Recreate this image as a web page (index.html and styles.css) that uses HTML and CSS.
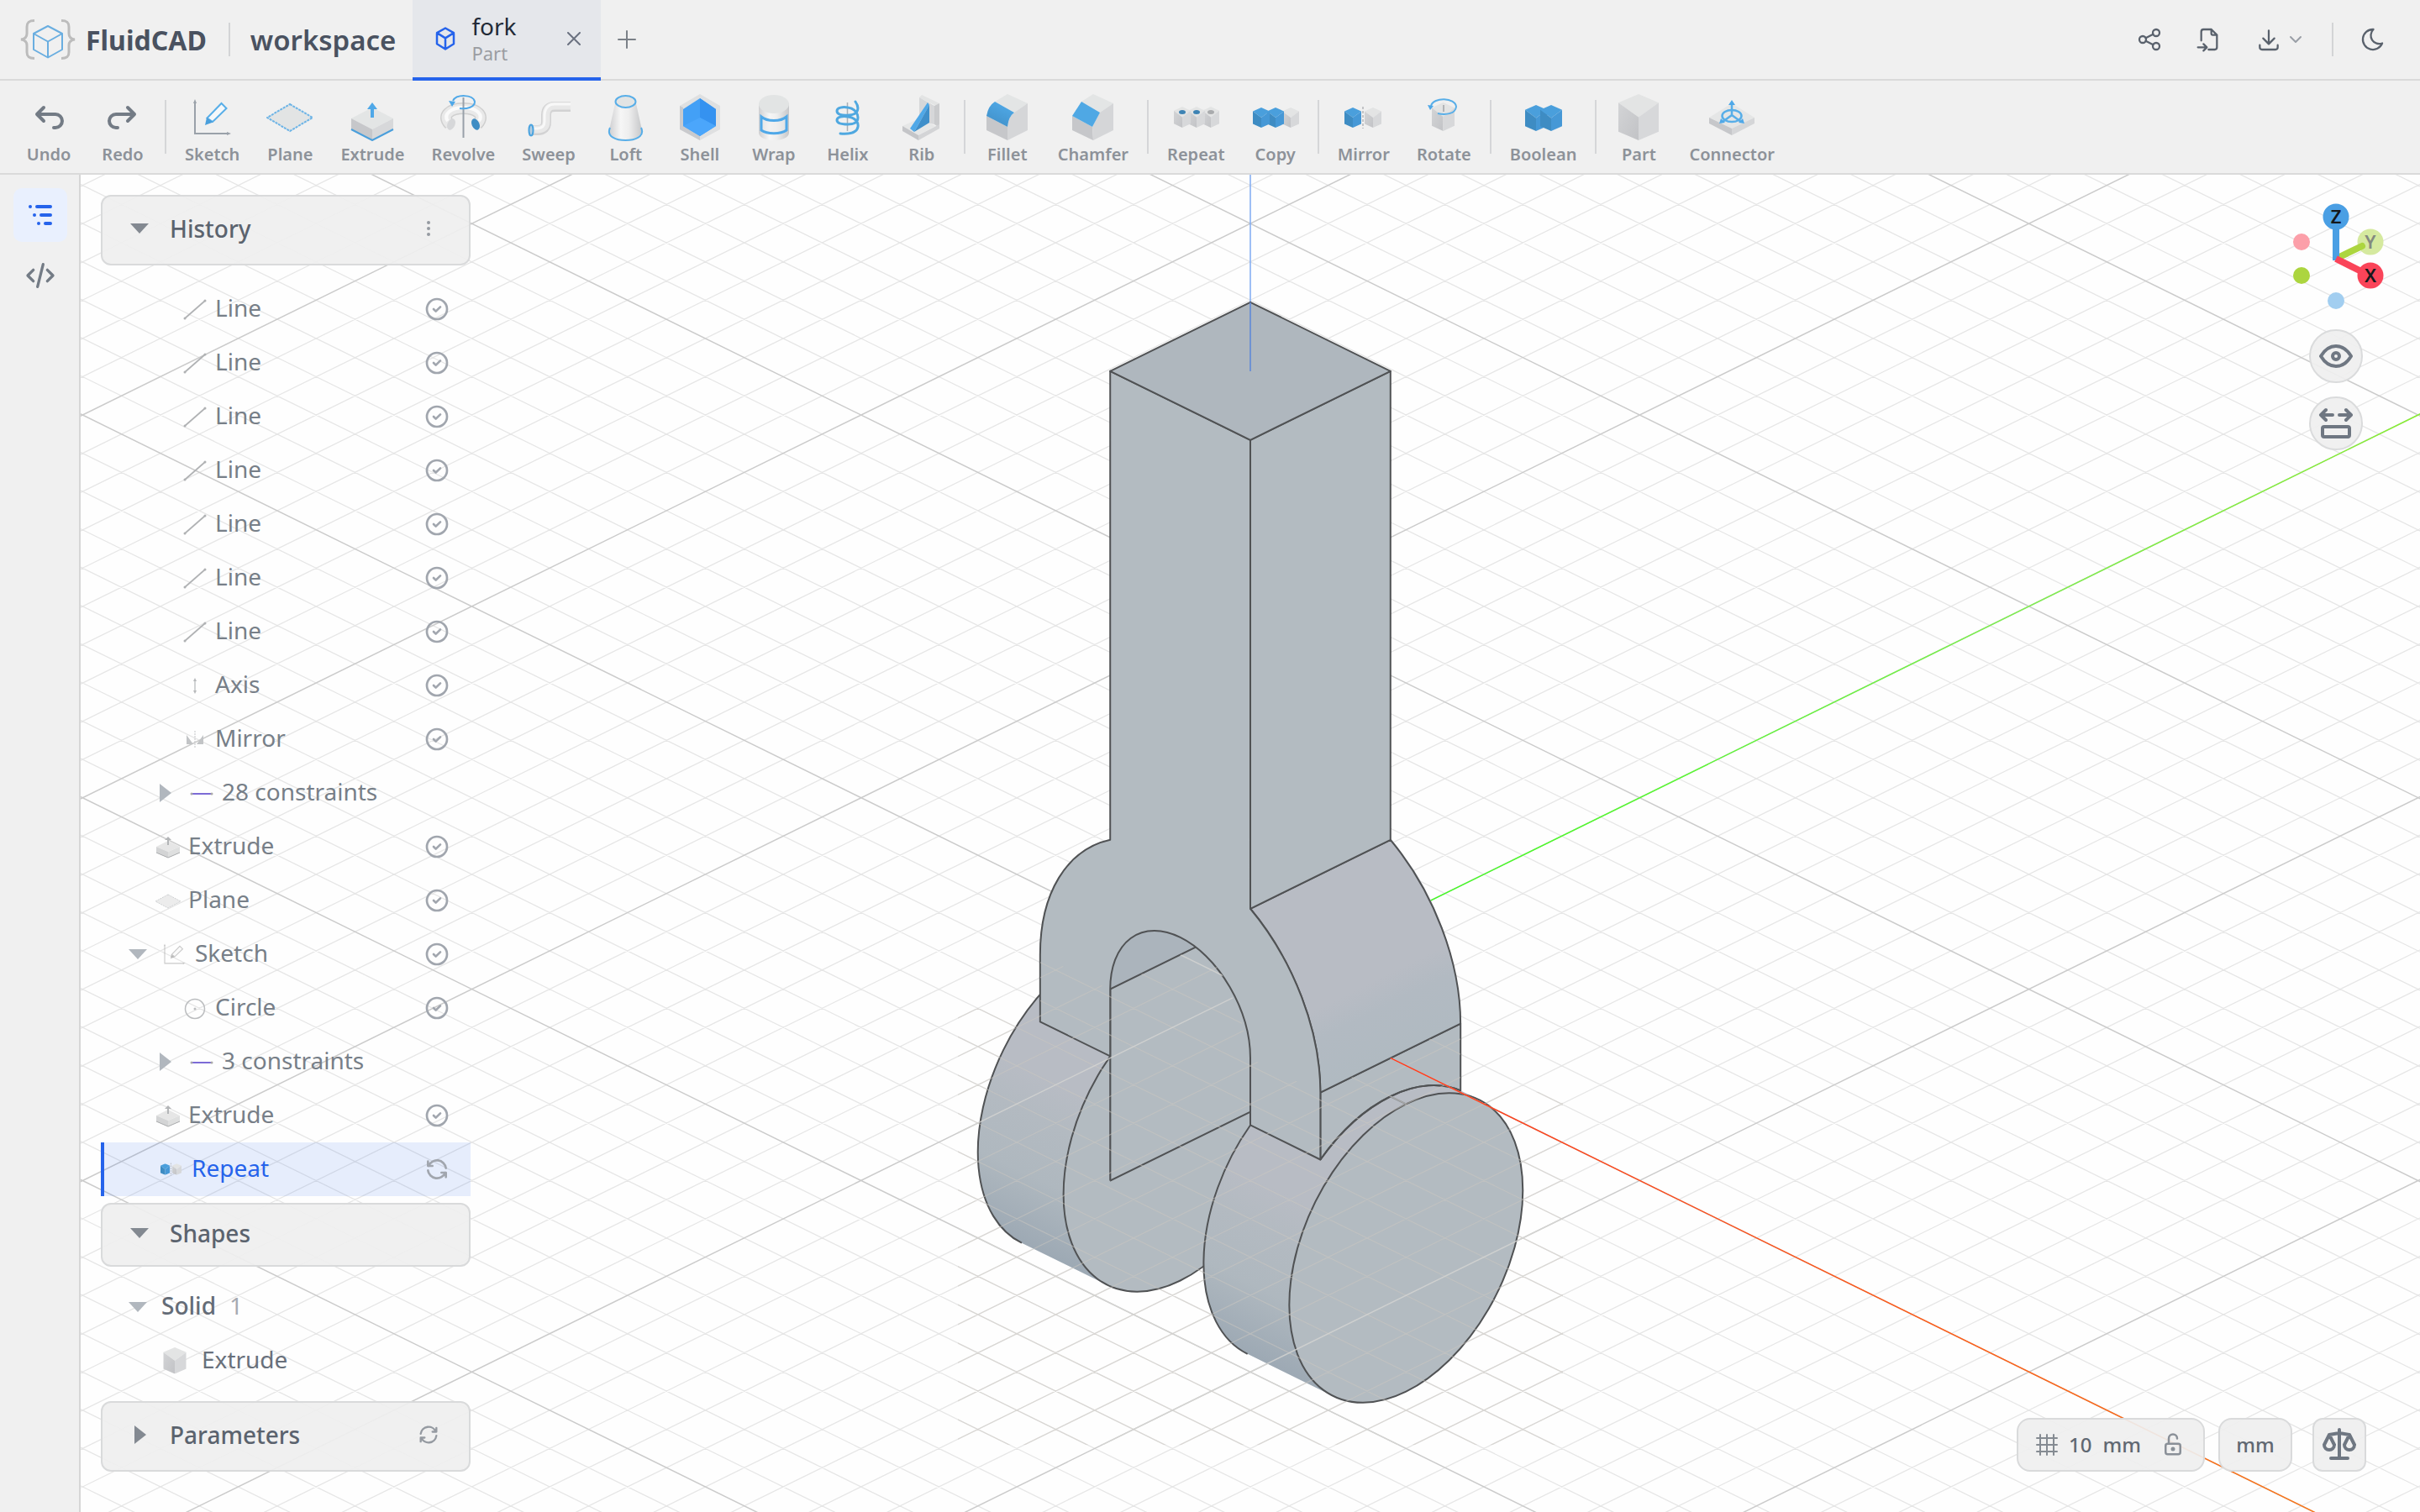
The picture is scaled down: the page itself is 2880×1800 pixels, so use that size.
FILE: index.html
```html
<!DOCTYPE html>
<html lang="en">
<head>
<meta charset="utf-8">
<title>FluidCAD - fork</title>
<link rel="stylesheet" href="styles.css">
</head>
<body>

<svg class="sprite" aria-hidden="true">
  <defs>
    <linearGradient id="pipe" x1="0" x2="1" y1="0" y2="0"><stop offset="0" stop-color="#cfcfd1"/><stop offset=".35" stop-color="#f6f6f6"/><stop offset=".6" stop-color="#eeeeee"/><stop offset="1" stop-color="#c6c7c9"/></linearGradient>
    <linearGradient id="leftside" x1="0" y1="0" x2="1" y2="1"><stop offset="0" stop-color="#d3d4d6"/><stop offset="1" stop-color="#c2c3c6"/></linearGradient>
    <linearGradient id="fillet-blue" x1="0" y1="1" x2=".5" y2="0"><stop offset="0" stop-color="#3f8dc4"/><stop offset="1" stop-color="#4fa8e6"/></linearGradient>

    <symbol id="box-grey" viewBox="0 0 48 54" preserveAspectRatio="none">
      <path fill="#e3e4e4" d="M24 0 48 10 24 27 0 10z"/><path fill="url(#leftside)" d="M0 10 24 27V54L0 44z"/><path fill="#d7d8da" d="M48 10 24 27V54L48 44z"/>
    </symbol>
    <symbol id="box-blue" viewBox="0 0 48 54" preserveAspectRatio="none">
      <path fill="#4a9fdc" d="M24 0 48 10 24 27 0 10z"/><path fill="#3e8cc3" d="M0 10 24 27V54L0 44z"/><path fill="#4698d6" d="M48 10 24 27V54L48 44z"/>
    </symbol>

    <symbol id="i-cube" viewBox="0 0 24 24"><path d="M12 2 20 6.500V17L12 22 4 17V6.500zM4 6.500 12 11.500 20 6.500M12 11.500V22"/></symbol>
    <symbol id="i-undo" viewBox="0 0 24 24"><path d="M9 14l-4-4 4-4M5 10h11a4 4 0 1 1 0 8h-1"/></symbol>
    <symbol id="i-redo" viewBox="0 0 24 24"><path d="M15 14l4-4-4-4M19 10H8a4 4 0 1 0 0 8h1"/></symbol>
    <symbol id="i-check" viewBox="0 0 24 24"><circle cx="12" cy="12" r="9"/><path d="M9 12l2 2 4-4"/></symbol>
    <symbol id="i-refresh" viewBox="0 0 24 24"><path d="M20 11A8.100 8.100 0 0 0 4.500 9M4 5v4h4M4 13a8.100 8.100 0 0 0 15.500 2M20 19v-4h-4"/></symbol>

    <symbol id="i-sketch" viewBox="0 0 56 56">
      <g fill="none" stroke="#9aa1a9" stroke-width="2"><path d="M7 9V47H47"/></g><path fill="#9aa1a9" d="M7 6 9 11H5zM50 47 45 45V49z"/>
      <path fill="#f5f8fa" stroke="#58aee8" stroke-width="2" d="M21.500 28.500 38.500 11 44.500 17 28 33z"/><path fill="#4a9fdc" d="M19 37 21 28 28.500 33.500z"/>
    </symbol>
    <symbol id="i-plane" viewBox="0 0 56 56"><path fill="#e2e4e4" stroke="#6db4e6" stroke-width="2" stroke-dasharray="3 1" d="M28 12 55 28 28 44 1 28z"/></symbol>
    <symbol id="i-extrude" viewBox="0 0 56 56">
      <path fill="#e3e5e5" d="M28 16 53 29 28 42 3 29z"/><path fill="#c6c7ca" d="M3 29 28 42V55L3 42z"/><path fill="#d7d8da" d="M53 29 28 42V55L53 42z"/>
      <path fill="none" stroke="#4a9fdc" stroke-width="2" d="M3 42 28 55 53 42"/><path fill="#4fa8e8" d="M28 10 34 18H30V28H26V18H22z"/>
    </symbol>
    <symbol id="i-revolve" viewBox="0 0 56 56">
      <path fill="none" stroke="#cfcfcf" stroke-width="14" d="M12 36C2 26 12 17 28.500 17S55 26 45 36"/><path fill="none" stroke="#e9e9e9" stroke-width="11" d="M12 36C2 26 12 17 28.500 17S55 26 45 36"/><path fill="none" stroke="#fafafa" stroke-width="4" d="M10 32C4 24 14 16 28.500 16S53 24 47 32"/>
      <ellipse cx="14" cy="36" rx="4.500" ry="7" transform="rotate(24 14 36)" fill="#d6d7d9"/><ellipse cx="43" cy="36" rx="4.500" ry="7" transform="rotate(-24 43 36)" fill="#3f8dc4"/>
      <path stroke="#98a0a9" stroke-width="2" d="M28.500 4V52"/><path fill="none" stroke="#4fa8e8" stroke-width="2" d="M16 8C20 0 40 0 42 9 42 16 32 18 24 17"/><path fill="#4fa8e8" d="M11 8 19 9 15 15z"/>
    </symbol>
    <symbol id="i-sweep" viewBox="0 0 56 56">
      <path fill="none" stroke="#d2d2d3" stroke-width="12" d="M7 43H15Q25 43 25 33V25Q25 15 35 15H54"/><path fill="none" stroke="#e8e8e8" stroke-width="9" d="M7 42H15Q25 42 25 33V25Q25 14 35 14H54"/><path fill="none" stroke="#f8f8f8" stroke-width="3" d="M7 41H15Q23 40 23 33V25Q24 12 35 12H54"/>
      <ellipse cx="7" cy="43" rx="2.500" ry="6.500" fill="#b5cde0" stroke="#4aa3df" stroke-width="2"/>
    </symbol>
    <symbol id="i-loft" viewBox="0 0 56 56">
      <path fill="url(#pipe)" d="M15.500 9 8 43C8 58 47 58 47 43L39.500 9z"/><ellipse cx="27.500" cy="9" rx="12" ry="7" fill="#e2e4e4" stroke="#58aee8" stroke-width="2"/><path fill="none" stroke="#58aee8" stroke-width="2" d="M9 40C4 51 17 55 27.500 55S51 51 46 40"/>
    </symbol>
    <symbol id="i-shell" viewBox="0 0 56 56">
      <path fill="#dfe0e1" d="M28 0 52 14V42L28 55 4 42V14z"/><path fill="#c9cacd" d="M4 14 8 16V38L28 50V55L4 42z"/>
      <path fill="#43a0f6" d="M28 5 47 18V38L28 50 8 38V18z"/><path fill="#3592f0" d="M28 5 47 18V38L28 28z"/><path fill="#4ba6fb" d="M28 28 47 38 28 50 8 38z"/>
    </symbol>
    <symbol id="i-wrap" viewBox="0 0 56 56">
      <path fill="url(#pipe)" d="M10 11V46C10 58 46 58 46 46V11z"/><ellipse cx="28" cy="12" rx="18" ry="11" fill="#e2e4e4"/><path fill="#efefef" fill-opacity=".6" stroke="#4fa8e8" stroke-width="3" d="M13 27C20 33 36 33 43 27V43C36 48 20 48 13 43z"/>
    </symbol>
    <symbol id="i-helix" viewBox="0 0 56 56">
      <path stroke="#aab0b6" stroke-width="1.500" d="M27.500 10V44"/><path fill="none" stroke="#4fa8e0" stroke-width="3" stroke-linecap="round" d="M37 9C42 16 41 24 30 25 20 26 15 24 15 20S22 15 28 16C37 17 40 24 40 28 40 34 35 36 28 36S15 35 15 31 22 26 28 27C37 28 41 34 40 39 39 45 32 48 19 47"/>
    </symbol>
    <symbol id="i-rib" viewBox="0 0 56 56">
      <path fill="#e3e4e4" d="M28 1 49 11 45 14 25 4z"/><path fill="#d6d7d9" d="M25 4 43 14V36L25 32z"/><path fill="#cacbcd" d="M43 14 49 11V40L43 36z"/><path fill="#e6e7e7" d="M5 38 25 29 44 38 24 49z"/><path fill="#c4c5c8" d="M5 38 24 49V55L5 44z"/><path fill="#d3d4d6" d="M24 49 49 36V41L24 55z"/>
      <path fill="#4fa8e8" d="M35 10 37 13 19 45 14 41z"/><path fill="#3f8fca" d="M37 13V34L19 45z"/>
    </symbol>
    <symbol id="i-fillet" viewBox="0 0 56 56">
      <path fill="#e3e5e5" d="M28 0 52 11 36 22 13 9z"/><path fill="#c6c7ca" d="M3 26 28 39V55L3 43z"/><path fill="#d5d6d8" d="M52 11V43L28 55V39Q29 27 36 22z"/><path fill="url(#fillet-blue)" d="M13 9 36 22Q29 27 28 39L3 26Q5 14 13 9z"/>
    </symbol>
    <symbol id="i-chamfer" viewBox="0 0 56 56">
      <path fill="#e3e5e5" d="M28 0 52 11 36 22 14 9z"/><path fill="#c6c7ca" d="M3 26 27 39 28 55 3 43z"/><path fill="#d5d6d8" d="M52 11V43L28 55 27 39 36 22z"/><path fill="#4fa8e4" d="M14 9 36 22 27 39 3 26z"/>
    </symbol>
    <symbol id="i-repeat" viewBox="0 0 56 56">
      <use href="#box-grey" x="36" y="15" width="20" height="25"/><use href="#box-grey" x="19" y="15" width="20" height="25"/><use href="#box-grey" x="2" y="15" width="20" height="25"/>
      <g fill="#3d83b4"><ellipse cx="12" cy="21.500" rx="4" ry="2.500"/><ellipse cx="29" cy="21.500" rx="4" ry="2.500"/></g><ellipse cx="46" cy="21.500" rx="4" ry="2.500" fill="#a9abad"/>
    </symbol>
    <symbol id="i-copy" viewBox="0 0 56 56">
      <use href="#box-grey" x="36" y="16" width="20" height="24"/><use href="#box-blue" x="18" y="16" width="20" height="24"/><use href="#box-blue" x="1" y="16" width="20" height="24"/>
    </symbol>
    <symbol id="i-mirror" viewBox="0 0 56 56">
      <use href="#box-blue" x="5" y="16" width="20" height="24"/><use href="#box-grey" x="29" y="16" width="20" height="24"/><path stroke="#b2b4b7" stroke-width="1.500" stroke-dasharray="3 2" d="M27 15V41"/>
    </symbol>
    <symbol id="i-rotate" viewBox="0 0 56 56">
      <use href="#box-grey" x="14" y="10" width="27" height="34"/><path stroke="#b2b4b7" stroke-width="2" d="M28 13V21"/><path fill="none" stroke="#58aee8" stroke-width="2" d="M13 14C16 3 42 4 43 15 42 24 30 25 21 23"/><path fill="#4fa8e8" d="M9 13 16 14 12 19z"/>
    </symbol>
    <symbol id="i-boolean" viewBox="0 0 56 56">
      <use href="#box-blue" x="6" y="13" width="26" height="31"/><use href="#box-blue" x="24" y="13" width="26" height="31"/>
    </symbol>
    <symbol id="i-part" viewBox="0 0 56 56"><use href="#box-grey" x="4" y="0" width="48" height="55"/></symbol>
    <symbol id="i-connector" viewBox="0 0 56 56">
      <path fill="#e5e6e6" d="M28 11 55 28 28 41 1 28z"/><path fill="#c6c7ca" d="M1 28 28 41V49L1 35z"/><path fill="#d5d6d8" d="M55 28 28 41V49L55 35z"/>
      <g fill="none" stroke="#58aee8" stroke-width="2.500"><path d="M28 12V25L17 33M28 25 39 33"/><ellipse cx="28" cy="26" rx="11.500" ry="7"/></g><path fill="#4fa8e8" d="M28 7 32 13H24zM13 35 15 29 20 34zM43 35 41 29 36 34z"/>
    </symbol>
    <symbol id="i-slab" viewBox="0 0 32 32">
      <path fill="#e6e6e6" d="M16 9 30 16 16 22 2 16z"/><path fill="#d3d4d5" d="M2 16 16 22V29L2 23z"/><path fill="#dedfdf" d="M30 16 16 22V29L30 23z"/><path fill="none" stroke="#a9abad" d="M2 23 16 29 30 23"/><path fill="#b3b5b7" d="M16 4 20 8H17V14H15V8H12z"/>
    </symbol>
    <symbol id="i-line" viewBox="0 0 32 32"><g fill="#b0b2b4"><path stroke="#b0b2b4" stroke-width="1.700" d="M4 27 28 6"/><circle cx="4" cy="27" r="1.500"/><circle cx="28" cy="6" r="1.500"/></g></symbol>
    <symbol id="i-constraint" viewBox="0 0 32 32"><path stroke="#7c6bd6" stroke-width="2" d="M4 17H28"/><g fill="#a9a9a9"><circle cx="4" cy="17" r="1.500"/><circle cx="28" cy="17" r="1.500"/></g></symbol>
  </defs>
</svg>

<div class="app">
  <header class="topbar">
    <a class="brand" href="#">
      <svg class="logo" viewBox="0 0 66 48" aria-hidden="true">
        <g fill="none" stroke="#bcbcbc" stroke-width="3"><path d="M17 1.500C10 1.500 8 4 8 9V17C8 21 5 23.500 1 24 5 24.500 8 27 8 31V39C8 44 10 46.500 17 46.500M49 1.500C56 1.500 58 4 58 9V17C58 21 61 23.500 65 24 61 24.500 58 27 58 31V39C58 44 56 46.500 49 46.500"/></g>
        <path fill="none" stroke="#6aaee0" stroke-width="2" stroke-linejoin="round" d="M33 8 50 17V36L33 45.500 16 36V17zM16 17 33 26.500 50 17M33 26.500V45.500"/>
      </svg>
      <span>FluidCAD</span>
    </a>
    <span class="vline"></span>
    <span class="workspace">workspace</span>
    <div class="tab">
      <svg class="tab-icon line-icon" aria-hidden="true"><use href="#i-cube"/></svg>
      <div class="tab-text"><span class="tab-name">fork</span><span class="tab-kind">Part</span></div>
      <button class="tab-close" aria-label="Close tab"><svg class="line-icon" viewBox="0 0 16 16"><path d="M1 1 15 15M15 1 1 15"/></svg></button>
    </div>
    <button class="tab-add" aria-label="New tab"><svg class="line-icon" viewBox="0 0 22 22"><path d="M11 1V21M1 11H21"/></svg></button>
    <div class="actions">
      <button aria-label="Share"><svg class="line-icon" viewBox="0 0 24 24"><circle cx="6" cy="12" r="3"/><circle cx="18" cy="6" r="3"/><circle cx="18" cy="18" r="3"/><path d="M8.700 10.700l6.600-3.400M8.700 13.300l6.600 3.400"/></svg></button>
      <button aria-label="Import"><svg class="line-icon" viewBox="0 0 24 24"><path d="M14 3v4a1 1 0 0 0 1 1h4M5 13V5a2 2 0 0 1 2-2h7l5 5v11a2 2 0 0 1-2 2h-5.500M2 19h8M7 16l3 3-3 3"/></svg></button>
      <button class="download" aria-label="Export"><svg class="line-icon" viewBox="0 0 24 24"><path d="M4 17v2a2 2 0 0 0 2 2h12a2 2 0 0 0 2-2v-2M7 11l5 5 5-5M12 4V16"/></svg><svg class="chev line-icon" viewBox="0 0 16 10"><path d="M2 2 8 8 14 2"/></svg></button>
      <span class="vline"></span>
      <button aria-label="Dark mode"><svg class="line-icon" viewBox="0 0 24 24"><path d="M12 3h.4A7.500 7.500 0 0 0 20.300 15.400 9 9 0 1 1 12 3z"/></svg></button>
    </div>
  </header>

  <nav class="toolbar" aria-label="Tools">
    <button class="tool"><svg class="line-icon nav-icon"><use href="#i-undo"/></svg>Undo</button>
    <button class="tool"><svg class="line-icon nav-icon"><use href="#i-redo"/></svg>Redo</button>
    <span class="sep"></span>
    <button class="tool"><svg><use href="#i-sketch"/></svg>Sketch</button>
    <button class="tool"><svg><use href="#i-plane"/></svg>Plane</button>
    <button class="tool"><svg><use href="#i-extrude"/></svg>Extrude</button>
    <button class="tool"><svg><use href="#i-revolve"/></svg>Revolve</button>
    <button class="tool"><svg><use href="#i-sweep"/></svg>Sweep</button>
    <button class="tool"><svg><use href="#i-loft"/></svg>Loft</button>
    <button class="tool"><svg><use href="#i-shell"/></svg>Shell</button>
    <button class="tool"><svg><use href="#i-wrap"/></svg>Wrap</button>
    <button class="tool"><svg><use href="#i-helix"/></svg>Helix</button>
    <button class="tool"><svg><use href="#i-rib"/></svg>Rib</button>
    <span class="sep"></span>
    <button class="tool"><svg><use href="#i-fillet"/></svg>Fillet</button>
    <button class="tool"><svg><use href="#i-chamfer"/></svg>Chamfer</button>
    <span class="sep"></span>
    <button class="tool"><svg><use href="#i-repeat"/></svg>Repeat</button>
    <button class="tool"><svg><use href="#i-copy"/></svg>Copy</button>
    <span class="sep"></span>
    <button class="tool"><svg><use href="#i-mirror"/></svg>Mirror</button>
    <button class="tool"><svg><use href="#i-rotate"/></svg>Rotate</button>
    <span class="sep"></span>
    <button class="tool"><svg><use href="#i-boolean"/></svg>Boolean</button>
    <span class="sep"></span>
    <button class="tool"><svg><use href="#i-part"/></svg>Part</button>
    <button class="tool"><svg><use href="#i-connector"/></svg>Connector</button>
  </nav>

  <div class="body">
    <aside class="rail">
      <button class="rail-btn active" aria-label="History tree"><svg viewBox="0 0 40 40"><g stroke="currentColor" stroke-width="4" stroke-linecap="round"><path d="M16 10H32M21 20H32M26 30H32"/></g><g fill="currentColor"><circle cx="8" cy="10" r="2"/><circle cx="13" cy="20" r="2"/><circle cx="18" cy="30" r="2"/></g></svg></button>
      <button class="rail-btn" aria-label="Code"><svg class="line-icon" viewBox="0 0 24 24"><path d="M7 8l-4 4 4 4M17 8l4 4-4 4M14 4l-4 16"/></svg></button>
    </aside>

    <main class="viewport">
      <svg class="scene" viewBox="96 208 2784 1592" preserveAspectRatio="xMidYMid slice" role="img" aria-label="Fork part on the ground grid">
        <defs>
          <linearGradient id="green-axis" gradientUnits="userSpaceOnUse" x1="1700" y1="1073" x2="2880" y2="493"><stop offset="0" stop-color="#3fff1e"/><stop offset=".6" stop-color="#7fee50"/><stop offset="1" stop-color="#86f02e"/></linearGradient>
          <linearGradient id="red-axis" gradientUnits="userSpaceOnUse" x1="1655" y1="1260" x2="2752" y2="1800"><stop offset="0" stop-color="#ff3a1c"/><stop offset="1" stop-color="#f9771a"/></linearGradient>
          <linearGradient id="wheel-l" gradientUnits="userSpaceOnUse" x1="1300" y1="1308" x2="1216" y2="1480"><stop offset="0" stop-color="#b8bcc4"/><stop offset=".25" stop-color="#b3bac1"/><stop offset=".6" stop-color="#afb8bf"/><stop offset="1" stop-color="#9da9b4"/></linearGradient>
          <linearGradient id="wheel-r" gradientUnits="userSpaceOnUse" x1="1569" y1="1440" x2="1485" y2="1612"><stop offset="0" stop-color="#b8bcc4"/><stop offset=".25" stop-color="#b3bac1"/><stop offset=".6" stop-color="#afb8bf"/><stop offset="1" stop-color="#9da9b4"/></linearGradient>
          <linearGradient id="shoulder" gradientUnits="userSpaceOnUse" x1="1610" y1="1180" x2="1652" y2="1265"><stop offset="0" stop-color="#b8bcc4"/><stop offset=".35" stop-color="#b2bac2"/><stop offset="1" stop-color="#b0bac1"/></linearGradient>
          <clipPath id="wheel-l-body"><circle r="30" transform="matrix(4.6325 -2.2785 0 -5.704 1302.7 1303.3)"/><path d="M1215.900 1479.700 1317.800 1529.800 1491.400 1177 1389.500 1126.900z"/></clipPath>
          <clipPath id="wheel-r-body"><circle r="30" transform="matrix(4.6325 -2.2785 0 -5.704 1571.4 1435.4)"/><path d="M1484.600 1611.800 1586.500 1661.900 1760.100 1309.100 1658.200 1259z"/></clipPath>
          <clipPath id="arch"><path transform="matrix(4.6325 2.2785 0 -5.704 1404.6 1218.6)" d="M-18 -60V0A18 18 0 0 0 18 0V-60z"/></clipPath>
          <clipPath id="below-ground"><path d="M1238 1137 1321 1178 1423 1128 1452 1155 1475 1205 1488 1260 1571 1301 1738 1219V1300H1860V1720H1140V1200H1238z"/></clipPath>
        </defs>
        <rect x="96" y="208" width="2784" height="1592" fill="#fefefe"/>
        <path class="grid-minor"/><path class="grid-major"/>
        <path stroke="url(#green-axis)" stroke-width="1.500" d="M1488 1177.600 2900 483.100"/>
        <path stroke="#7eaaf2" stroke-width="1.500" d="M1488 200V360"/>

        <rect x="1150" y="1110" width="360" height="440" fill="url(#wheel-l)" clip-path="url(#wheel-l-body)"/>
        <g class="edges" fill="#b3bbc1">
          <path fill="none" transform="matrix(4.6325 -2.2785 0 -5.704 1302.7 1303.3)" d="M-18.730 -23.440A30 30 0 0 0 18.730 23.440"/>
          <circle r="30" transform="matrix(4.6325 -2.2785 0 -5.704 1404.6 1353.4)"/>
        </g>

        <path fill="#abb4bc" d="M1321 1405V1060H1488V1324z" clip-path="url(#arch)"/>
        <g clip-path="url(#arch)"><path class="edges" fill="#b3bbc1" d="M1321.200 1177.600 1488 1095.600V1323.600L1321.200 1405.600z"/></g>
        <path class="edges" fill="none" d="M1321.200 1177.600V1405.600"/>

        <rect x="1420" y="1250" width="360" height="430" fill="url(#wheel-r)" clip-path="url(#wheel-r-body)"/>
        <path class="edges" fill="none" transform="matrix(4.6325 -2.2785 0 -5.704 1571.4 1435.4)" d="M-18.730 -23.440A30 30 0 0 0 -18 24"/>

        <g class="edges" fill="#b3bbc1">
          <path transform="matrix(4.6325 -2.2785 0 -5.704 1654.8 1259.6)" d="M-18 0H18V-14A30 30 0 0 1 -18 -14z"/>
          <path fill="url(#shoulder)" d="M1488 1081.800C1530 1128 1571.500 1215 1571.400 1300.600L1738.200 1218.600C1738 1132 1698 1046 1654.800 999.800z" stroke="none"/>
          <path fill="none" transform="matrix(4.6325 2.2785 0 -5.704 1404.6 1218.6)" d="M18 31.180A36 36 0 0 0 36 0L72 28.760A36 36 0 0 1 54 59.940z"/>
          <path transform="matrix(4.6325 2.2785 0 -5.704 1404.6 1218.6)" d="M-18 129H18V31.180A36 36 0 0 0 36 0V-14H18V0A18 18 0 0 1 -18 0V-14H-36V0A36 36 0 0 0 -18 31.180z"/>
          <path d="M1488 523.800 1654.800 441.800V999.800L1488 1081.800z"/>
          <path fill="#afb7be" d="M1488 359.800 1654.800 441.800 1488 523.800 1321.200 441.800z"/>
          <path fill="none" transform="matrix(4.6325 -2.2785 0 -5.704 1654.8 1259.6)" d="M18 -14A30 30 0 0 1 -18 -14"/>
          <circle r="30" transform="matrix(4.6325 -2.2785 0 -5.704 1673.3 1485.5)"/>
        </g>
        <path stroke="#858a8e" stroke-width="2" d="M1654.800 1305.300 1673.300 1314.400"/>
        <path stroke="#5a86d8" stroke-width="1.500" d="M1488 360V442"/>
        <g clip-path="url(#below-ground)"><path class="grid-minor over"/><path class="grid-major over"/></g>
        <path stroke="url(#red-axis)" stroke-width="1.500" d="M1655 1259.600 2760 1803"/>
      </svg>

      <section class="panels">
        <div class="panel">
          <button class="caret down" aria-label="Collapse history"></button><h2>History</h2>
          <button class="panel-action" aria-label="History menu"><svg viewBox="0 0 28 28"><g fill="currentColor"><circle cx="14" cy="7" r="2"/><circle cx="14" cy="14" r="2"/><circle cx="14" cy="21" r="2"/></g></svg></button>
        </div>
        <ul class="rows history">
          <li class="row d3"><svg class="ri"><use href="#i-line"/></svg><span>Line</span><svg class="state line-icon"><use href="#i-check"/></svg></li>
          <li class="row d3"><svg class="ri"><use href="#i-line"/></svg><span>Line</span><svg class="state line-icon"><use href="#i-check"/></svg></li>
          <li class="row d3"><svg class="ri"><use href="#i-line"/></svg><span>Line</span><svg class="state line-icon"><use href="#i-check"/></svg></li>
          <li class="row d3"><svg class="ri"><use href="#i-line"/></svg><span>Line</span><svg class="state line-icon"><use href="#i-check"/></svg></li>
          <li class="row d3"><svg class="ri"><use href="#i-line"/></svg><span>Line</span><svg class="state line-icon"><use href="#i-check"/></svg></li>
          <li class="row d3"><svg class="ri"><use href="#i-line"/></svg><span>Line</span><svg class="state line-icon"><use href="#i-check"/></svg></li>
          <li class="row d3"><svg class="ri"><use href="#i-line"/></svg><span>Line</span><svg class="state line-icon"><use href="#i-check"/></svg></li>
          <li class="row d3"><svg class="ri" viewBox="0 0 32 32"><path stroke="#c2c4c6" stroke-width="1.500" d="M16 9V24"/><path fill="#b7b9bb" d="M16 7 18 11H14zM16 26 18 22H14z"/></svg><span>Axis</span><svg class="state line-icon"><use href="#i-check"/></svg></li>
          <li class="row d3"><svg class="ri" viewBox="0 0 32 32"><path fill="#c2c4c6" d="M6 11 14 22H6zM26 11V22H18z"/><path stroke="#c2c4c6" stroke-dasharray="2 1" d="M16 6V27"/></svg><span>Mirror</span><svg class="state line-icon"><use href="#i-check"/></svg></li>
          <li class="row d2"><button class="caret right" aria-label="Expand constraints"></button><svg class="ri"><use href="#i-constraint"/></svg><span>28 constraints</span></li>
          <li class="row d2"><svg class="ri"><use href="#i-slab"/></svg><span>Extrude</span><svg class="state line-icon"><use href="#i-check"/></svg></li>
          <li class="row d2"><svg class="ri" viewBox="0 0 32 32"><path fill="#ececec" stroke="#cfd1d3" stroke-dasharray="2 1" d="M16 9 31 17 16 25 1 17z"/></svg><span>Plane</span><svg class="state line-icon"><use href="#i-check"/></svg></li>
          <li class="row d1"><button class="caret down" aria-label="Collapse sketch"></button><svg class="ri muted"><use href="#i-sketch"/></svg><span>Sketch</span><svg class="state line-icon"><use href="#i-check"/></svg></li>
          <li class="row d3"><svg class="ri" viewBox="0 0 32 32"><circle cx="16" cy="17" r="11.500" fill="none" stroke="#bbbdbf" stroke-width="1.500"/><circle cx="16" cy="17" r="1.500" fill="#bbbdbf"/></svg><span>Circle</span><svg class="state line-icon"><use href="#i-check"/></svg></li>
          <li class="row d2"><button class="caret right" aria-label="Expand constraints"></button><svg class="ri"><use href="#i-constraint"/></svg><span>3 constraints</span></li>
          <li class="row d2"><svg class="ri"><use href="#i-slab"/></svg><span>Extrude</span><svg class="state line-icon"><use href="#i-check"/></svg></li>
          <li class="row d2 selected"><svg class="ri"><use href="#i-mirror"/></svg><span>Repeat</span><svg class="state line-icon"><use href="#i-refresh"/></svg></li>
        </ul>
        <div class="panel short"><button class="caret down" aria-label="Collapse shapes"></button><h2>Shapes</h2></div>
        <ul class="rows shapes">
          <li class="row d1 group"><button class="caret down" aria-label="Collapse solids"></button><span>Solid</span><span class="count">1</span></li>
          <li class="row shape"><svg class="ri"><use href="#i-part"/></svg><span>Extrude</span></li>
        </ul>
        <div class="panel">
          <button class="caret right" aria-label="Expand parameters"></button><h2>Parameters</h2>
          <button class="panel-action" aria-label="Reset parameters"><svg class="line-icon flip"><use href="#i-refresh"/></svg></button>
        </div>
      </section>

      <section class="view-tools">
        <svg class="gizmo" viewBox="-60 -66 120 132" role="img" aria-label="View orientation">
          <circle cx="-41" cy="-20" r="10" fill="#fc9fa9"/><circle cx="-41" cy="20" r="10" fill="#acd53f"/><circle cx="0" cy="50" r="10" fill="#a2cef0"/>
          <circle cx="41" cy="-20" r="15.500" fill="#d5e99f"/><text class="far" x="41" y="-12">Y</text>
          <g stroke-width="8"><path stroke="#acd53f" stroke-linecap="round" d="M4 -2 31 -15"/><path stroke="#4a9fe4" d="M0 2V-40"/><path stroke="#fa4459" d="M0 0 36 18"/></g>
          <circle cx="0" cy="-50" r="15.500" fill="#4a9fe4"/><text x="0" y="-42">Z</text>
          <circle cx="41" cy="20" r="15.500" fill="#fa4459"/><text x="41" y="28">X</text>
        </svg>
        <button class="round" aria-label="Visibility"><svg class="line-icon" viewBox="0 0 24 24"><circle cx="12" cy="12" r="2"/><path d="M21 12c-2.400 4-5.400 6-9 6s-6.600-2-9-6c2.400-4 5.400-6 9-6s6.600 2 9 6z"/></svg></button>
        <button class="round" aria-label="Measure"><svg class="line-icon" viewBox="0 0 24 24"><path d="M10 7H3l3-3M3 7l3 3M14 7h7l-3-3M21 7l-3 3"/><rect x="4" y="14" width="16" height="6" rx="1"/></svg></button>
      </section>

      <section class="status">
        <button class="pill grid-size"><svg class="line-icon thin" viewBox="0 0 26 26"><path d="M5 1V25M13 1V25M21 1V25M1 5H25M1 13H25M1 21H25"/></svg><span>10</span><span>mm</span><svg class="line-icon lock" viewBox="0 0 24 24"><rect x="5" y="11" width="14" height="10" rx="2"/><circle cx="12" cy="16" r="1"/><path d="M8 11V6a4 4 0 0 1 8 0"/></svg></button>
        <button class="pill unit">mm</button>
        <button class="pill square" aria-label="Mass properties"><svg class="line-icon" viewBox="0 0 24 24"><path d="M7 20h10M6 6l6-1 6 1M12 3V20M9 12L6 6l-3 6a3 3 0 0 0 6 0M21 12l-3-6-3 6a3 3 0 0 0 6 0"/></svg></button>
      </section>
    </main>
  </div>
</div>
<script src="scene.js"></script>
</body>
</html>
```
FILE: styles.css
```css
* { box-sizing: border-box; }

body {
  margin: 0;
  font-family: "Noto Sans", "Open Sans", sans-serif;
  font-size: 28px;
  color: #777f88;
  background: #f0f0f0;
}

button {
  margin: 0;
  padding: 0;
  border: 0;
  background: none;
  font: inherit;
  color: inherit;
}

svg { display: block; flex: none; }
.sprite { position: absolute; width: 0; height: 0; }

.line-icon {
  fill: none;
  stroke: currentColor;
  stroke-width: 2;
  stroke-linecap: round;
  stroke-linejoin: round;
}

.app { display: flex; flex-direction: column; height: 100vh; overflow: hidden; }

/* top bar */
.topbar {
  display: flex;
  align-items: center;
  height: 96px;
  flex: none;
  padding-left: 24px;
  border-bottom: 2px solid #dadada;
}
.brand {
  display: flex;
  align-items: center;
  gap: 12px;
  color: #4a5260;
  font-size: 32px;
  font-weight: 700;
  text-decoration: none;
}
.logo { width: 66px; height: 48px; }
.vline { width: 2px; height: 40px; background: #d3d4d6; }
.topbar > .vline { margin: 0 24px 0 26px; }
.workspace { font-size: 33px; font-weight: 600; color: #4a5260; }
.tab {
  display: flex;
  align-items: center;
  width: 224px;
  height: 96px;
  margin: 0 20px -2px 20px;
  padding: 0 24px;
  background: #e5e7eb;
  border-bottom: 4px solid #2563eb;
}
.tab-icon { width: 30px; height: 30px; color: #2563eb; margin-right: 16px; }
.tab-text { display: flex; flex-direction: column; flex: 1; gap: 2px; }
.tab-name { font-size: 28px; line-height: 32px; color: #222a37; }
.tab-kind { font-size: 22px; line-height: 28px; color: #9a9ca1; }
.tab-close svg { width: 16px; height: 16px; stroke-width: 2; color: #6b7280; }
.tab-add svg { width: 22px; height: 22px; color: #7b8087; }
.actions {
  display: flex;
  align-items: center;
  margin-left: auto;
  padding-right: 40px;
  gap: 39px;
  color: #59616c;
}
.actions button { display: flex; align-items: center; }
.actions svg { width: 32px; height: 32px; stroke-width: 1.7; }
.actions .chev { width: 16px; height: 10px; margin-left: 8px; color: #9a9fa7; stroke-width: 2; }
.actions .vline { margin: 0 -8px 0 -4px; }

/* tool ribbon */
.toolbar {
  display: flex;
  align-items: center;
  gap: 4px;
  height: 112px;
  flex: none;
  padding: 0 16px;
  border-bottom: 2px solid #dadada;
}
.tool {
  display: flex;
  flex-direction: column;
  align-items: center;
  gap: 4px;
  min-width: 84px;
  padding: 6px 14px 0;
  font-size: 20px;
  line-height: 24px;
  font-weight: 600;
  color: #8d9299;
}
.tool svg { width: 56px; height: 56px; }
.tool .nav-icon { width: 48px; height: 48px; margin: 4px; color: #737b85; }
.sep { width: 2px; height: 64px; margin: 0 4px; background: #d5d6d8; }

.body { display: flex; flex: 1; min-height: 0; }

/* left rail */
.rail {
  display: flex;
  flex-direction: column;
  gap: 8px;
  width: 96px;
  flex: none;
  padding: 16px 14px 0 16px;
  border-right: 2px solid #d6d6d6;
}
.rail-btn {
  display: grid;
  place-items: center;
  height: 64px;
  border-radius: 10px;
  color: #737b85;
}
.rail-btn svg { width: 40px; height: 40px; }
.rail-btn.active { background: #e9f0fe; color: #2563eb; }

/* 3D view */
.viewport { position: relative; flex: 1; min-width: 0; }
.scene { position: absolute; inset: 0; width: 100%; height: 100%; }
.grid-minor, .grid-major { fill: none; stroke-width: 1.3; }
.grid-minor { stroke: #e6e6e6; }
.grid-major { stroke: #cbcbcb; stroke-width: 1.5; }
.grid-minor.over { stroke: rgba(204, 200, 194, .5); }
.grid-major.over { stroke: rgba(212, 212, 210, .8); }
.edges, .edges * {
  stroke: #505254;
  stroke-width: 2;
  stroke-linejoin: round;
  vector-effect: non-scaling-stroke;
}
.edges [stroke="none"] { stroke: none; }

/* panels over the view */
.panels {
  position: absolute;
  top: 24px;
  left: 24px;
  width: 440px;
}
.panel {
  display: flex;
  align-items: center;
  height: 84px;
  padding: 0 30px 4px 32px;
  border: 2px solid #d9dadb;
  border-radius: 12px;
  background: rgba(239, 239, 239, .92);
  color: #838991;
}
.panel.short { height: 76px; margin-top: 8px; }
.panel h2 {
  flex: 1;
  margin: 0 0 0 24px;
  font-size: 28px;
  line-height: 40px;
  font-weight: 500;
  color: #5b636e;
}
.panel-action { display: grid; place-items: center; width: 36px; height: 36px; color: #959aa1; }
.panel-action svg { width: 28px; height: 28px; }
.flip { transform: scaleX(-1); }

.caret { width: 24px; height: 24px; flex: none; display: grid; place-items: center; }
.caret::before { content: ""; border: 0 solid transparent; }
.caret.down::before { border-width: 12px 11px 0; border-top-color: currentColor; }
.caret.right { padding-left: 2px; }
.caret.right::before { border-width: 11px 0 11px 14px; border-left-color: currentColor; }

.rows { list-style: none; margin: 0; padding: 0; }
.history { padding-top: 20px; }
.shapes { padding: 16px 0; }
.row {
  display: flex;
  align-items: center;
  height: 64px;
  padding-right: 24px;
}
.row span { line-height: 40px; padding-bottom: 4px; }
.row .caret { margin-right: 16px; color: #b1b7be; }
.d1 { padding-left: 32px; }
.d2 { padding-left: 64px; }
.d3 { padding-left: 96px; }
.ri { width: 32px; height: 32px; margin-right: 8px; }
.muted { filter: grayscale(1); opacity: .55; }
.state { width: 32px; height: 32px; margin-left: auto; color: #a1a6ae; }
.selected {
  border-left: 4px solid #2563eb;
  background: rgba(37, 99, 235, .11);
  color: #2563eb;
}
.group { font-weight: 500; color: #646c77; }
.count { margin-left: 16px; font-weight: 400; color: #a6aab2; }
.shape { padding-left: 72px; color: #68707b; }
.shape .ri { margin-right: 16px; }

/* view controls */
.view-tools {
  position: absolute;
  top: 34px;
  right: 40px;
  display: flex;
  flex-direction: column;
  align-items: center;
  gap: 16px;
}
.gizmo { width: 120px; height: 132px; margin-bottom: 2px; }
.gizmo text { font-size: 22px; font-weight: 600; text-anchor: middle; fill: #15181c; }
.gizmo .far { fill: #84897f; }
.round {
  display: grid;
  place-items: center;
  width: 64px;
  height: 64px;
  border: 2px solid #dadbdc;
  border-radius: 50%;
  background: rgba(239, 239, 239, .92);
  color: #6f7782;
}
.round svg { width: 48px; height: 48px; }

.status {
  position: absolute;
  right: 64px;
  bottom: 48px;
  display: flex;
}
.pill {
  display: flex;
  align-items: center;
  justify-content: center;
  height: 64px;
  border: 2px solid #d9dadb;
  border-radius: 16px;
  background: rgba(239, 239, 239, .92);
  font-size: 24px;
  line-height: 32px;
  font-weight: 500;
  color: #606872;
}
.grid-size { width: 224px; gap: 13px; }
.thin { width: 26px; height: 26px; color: #858b92; }
.lock { width: 30px; height: 30px; margin-left: 10px; color: #8a9098; }
.unit { width: 88px; margin-left: 16px; }
.square { width: 64px; margin-left: 24px; border-radius: 12px; }
.square svg { width: 48px; height: 48px; color: #6f7782; }
```
FILE: scene.js
```js
// Ground grid: isometric lines through the origin, a major line every ten cells.
const origin = { x: 1488, y: 1177.6 };
const cell = { x: 46.325, y: 22.785 };
const reach = 50;

function at(u, v) {
  return (origin.x + (u + v) * cell.x).toFixed(1) + ' ' + (origin.y + (u - v) * cell.y).toFixed(1);
}

let minor = '';
let major = '';
for (let i = -reach; i <= reach; i++) {
  const pair = 'M' + at(i, -reach) + 'L' + at(i, reach) + 'M' + at(-reach, i) + 'L' + at(reach, i);
  if (i % 10 === 0) major += pair; else minor += pair;
}
document.querySelectorAll('.grid-minor').forEach(p => p.setAttribute('d', minor));
document.querySelectorAll('.grid-major').forEach(p => p.setAttribute('d', major));
```
